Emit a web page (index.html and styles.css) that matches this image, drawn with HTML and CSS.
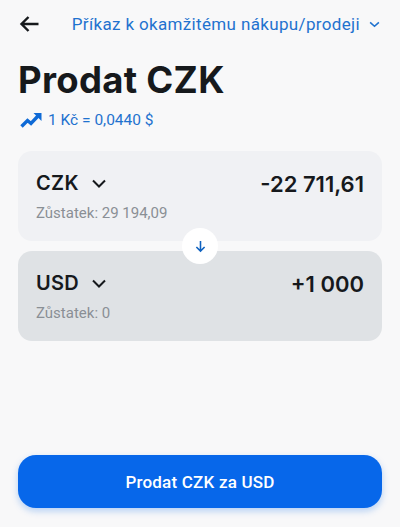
FILE: index.html
```html
<!DOCTYPE html>
<html lang="en">
<head>
  <meta charset="UTF-8">
  <title>Prodat CZK</title>
  <meta name="viewport" content="width=device-width, initial-scale=1">
  <link rel="stylesheet" href="styles.css">
</head>
<body>
  <div class="page">
    <header class="top-bar">
      <svg class="back-icon" viewBox="0 0 20 18" width="20" height="18">
        <path d="M19.500 9H2.500M9.500 2L2.500 9l7 7" fill="none" stroke="#16191c" stroke-width="2.400"/>
      </svg>
      <div class="order-type">
        <span>Příkaz k okamžitému nákupu/prodeji</span>
        <svg viewBox="0 0 12 8" width="11" height="7">
          <path d="M1 1.500l5 4.500 5-4.500" fill="none" stroke="#1f72cf" stroke-width="1.800"/>
        </svg>
      </div>
    </header>

    <h1 class="title">Prodat CZK</h1>

    <div class="rate">
      <svg viewBox="0 0 22 16" width="22" height="16">
        <path d="M1.500 14.500l6-6 3.500 3 7-7.500" fill="none" stroke="#0f6ad6" stroke-width="3.400"/>
        <path d="M13.500 1h8v8z" fill="#0f6ad6"/>
      </svg>
      <span>1 Kč = 0,0440 $</span>
    </div>

    <div class="exchange">
      <section class="card card-from">
        <div class="card-row">
          <div class="currency">
            <span>CZK</span>
            <svg viewBox="0 0 14 9" width="14" height="9">
              <path d="M1 1.500l6 6 6-6" fill="none" stroke="#16191c" stroke-width="2"/>
            </svg>
          </div>
          <div class="amount">-22 711,61</div>
        </div>
        <div class="balance">Zůstatek: 29 194,09</div>
      </section>

      <section class="card card-to">
        <div class="card-row">
          <div class="currency">
            <span>USD</span>
            <svg viewBox="0 0 14 9" width="14" height="9">
              <path d="M1 1.500l6 6 6-6" fill="none" stroke="#16191c" stroke-width="2"/>
            </svg>
          </div>
          <div class="amount">+1 000</div>
        </div>
        <div class="balance">Zůstatek: 0</div>
      </section>

      <div class="swap">
        <svg viewBox="0 0 12 14" width="11" height="13">
          <path d="M6 1v11M1.500 7.500L6 12l4.500-4.500" fill="none" stroke="#0f62c0" stroke-width="1.700"/>
        </svg>
      </div>
    </div>

    <button class="submit" type="button">Prodat CZK za USD</button>
  </div>
</body>
</html>
```

FILE: styles.css
```css
* {
  box-sizing: border-box;
}

body {
  margin: 0;
  background: #f8f8f9;
  color: #16191c;
  font-family: Roboto, "Liberation Sans", sans-serif;
}

.page {
  display: flex;
  flex-direction: column;
  height: 527px;
  padding: 0 18px 19px;
}

.top-bar {
  display: flex;
  align-items: center;
  justify-content: space-between;
  height: 50px;
  padding: 0 2px 2px 1px;
}

.back-icon {
  display: block;
}

.order-type {
  display: flex;
  align-items: center;
  gap: 9px;
  color: #1f72cf;
  font-size: 17px;
  letter-spacing: 0.35px;
}

.title {
  margin: 7px 0 0;
  font-family: Inter, "Liberation Sans", sans-serif;
  font-size: 36.500px;
  font-weight: 700;
  letter-spacing: 0.3px;
  line-height: 46px;
}

.rate {
  display: flex;
  align-items: center;
  gap: 6px;
  margin-top: 7px;
  padding-left: 2px;
  color: #1f72cf;
  font-size: 15.500px;
  line-height: 20px;
}

.exchange {
  position: relative;
  display: flex;
  flex-direction: column;
  gap: 10px;
  margin-top: 21px;
}

.card {
  height: 90px;
  padding: 18px 18px 0;
  border-radius: 14px;
}

.card-from {
  background: #f0f1f4;
}

.card-to {
  background: #dfe2e5;
}

.card-row {
  display: flex;
  align-items: center;
  justify-content: space-between;
  height: 28px;
}

.currency {
  display: flex;
  align-items: center;
  gap: 13px;
  font-family: Inter, "Liberation Sans", sans-serif;
  font-size: 20px;
  font-weight: 600;
  letter-spacing: 0.3px;
}

.amount {
  margin-top: 2px;
  font-family: Inter, "Liberation Sans", sans-serif;
  font-size: 22px;
  font-weight: 600;
}

.balance {
  margin-top: 6px;
  color: #8a8f95;
  font-size: 15px;
  line-height: 20px;
}

.swap {
  position: absolute;
  top: 77px;
  left: 164px;
  display: flex;
  align-items: center;
  justify-content: center;
  width: 36px;
  height: 36px;
  border-radius: 50%;
  background: #fff;
}

.submit {
  width: 100%;
  height: 53px;
  margin-top: auto;
  border: none;
  border-radius: 18px;
  background: #0767ea;
  box-shadow: 0 3px 7px rgba(7, 103, 234, 0.28);
  color: #fff;
  font-family: Roboto, "Liberation Sans", sans-serif;
  font-size: 17px;
  font-weight: 500;
  letter-spacing: 0.2px;
}
```
